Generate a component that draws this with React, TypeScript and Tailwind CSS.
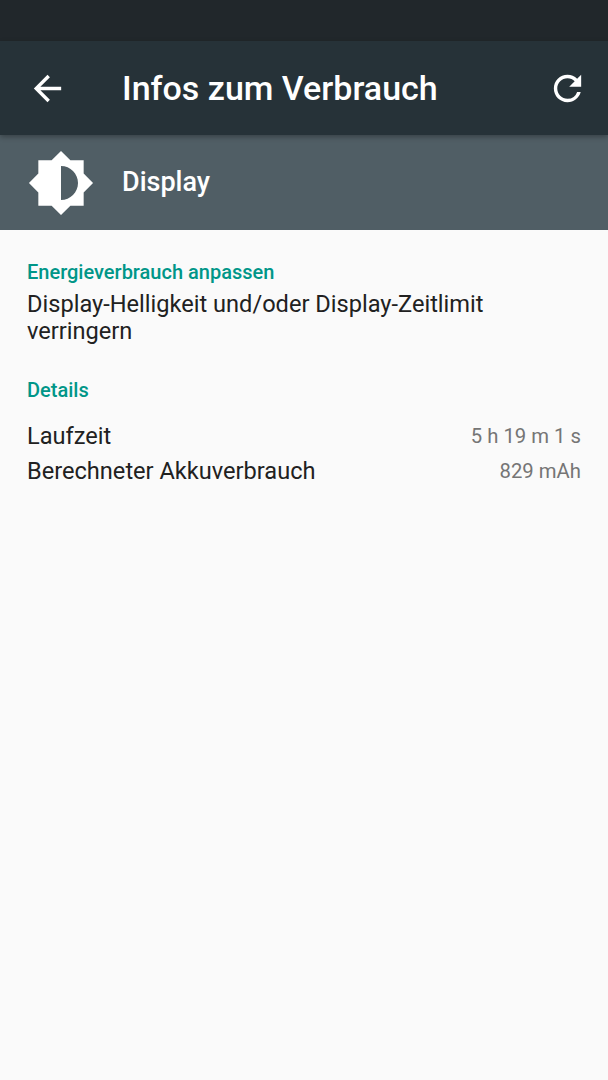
import React from 'react';
import { MdArrowBack, MdRefresh, MdBrightnessMedium } from 'react-icons/md';

interface DetailItem {
  label: string;
  value: string;
}

const details: DetailItem[] = [
  { label: 'Laufzeit', value: '5 h 19 m 1 s' },
  { label: 'Berechneter Akkuverbrauch', value: '829 mAh' },
];

const App: React.FC = () => {
  return (
    <div className="flex h-[1080px] w-[608px] flex-col overflow-hidden bg-[#fafafa] font-[Roboto,sans-serif] text-[#212121]">
      {/* Status bar */}
      <div className="h-[41px] shrink-0 bg-[#21272b]" />

      {/* Toolbar */}
      <header className="z-10 flex h-[94px] shrink-0 items-center bg-[#263238] pl-[27px] pr-[20px] text-white shadow-[0_2px_5px_rgba(0,0,0,0.3)]">
        <button type="button" aria-label="Zurück" className="w-[95px]">
          <MdArrowBack className="size-[41px]" />
        </button>
        <h1 className="flex-1 text-[34px] font-medium">Infos zum Verbrauch</h1>
        <button type="button" aria-label="Aktualisieren">
          <MdRefresh className="size-[41px]" />
        </button>
      </header>

      {/* App header */}
      <div className="flex h-[95px] shrink-0 items-center bg-[#505e65] pl-[27px] text-white">
        <div className="w-[95px]">
          <MdBrightnessMedium className="size-[68px]" />
        </div>
        <h2 className="text-[27px] font-medium">Display</h2>
      </div>

      <main className="px-[27px] pt-[30px]">
        <h3 className="text-[20px] font-medium leading-6 text-[#009688]">Energieverbrauch anpassen</h3>
        <p className="mt-[7px] text-[23.6px] leading-[27px]">
          Display-Helligkeit und/oder Display-Zeitlimit verringern
        </p>

        <h3 className="mt-[33px] text-[20px] font-medium leading-6 text-[#009688]">Details</h3>
        <dl className="mt-[17px]">
          {details.map((item) => (
            <div key={item.label} className="flex h-[35px] items-center justify-between">
              <dt className="text-[23.6px]">{item.label}</dt>
              <dd className="text-[20.3px] text-[#757575]">{item.value}</dd>
            </div>
          ))}
        </dl>
      </main>
    </div>
  );
};

export default App;
